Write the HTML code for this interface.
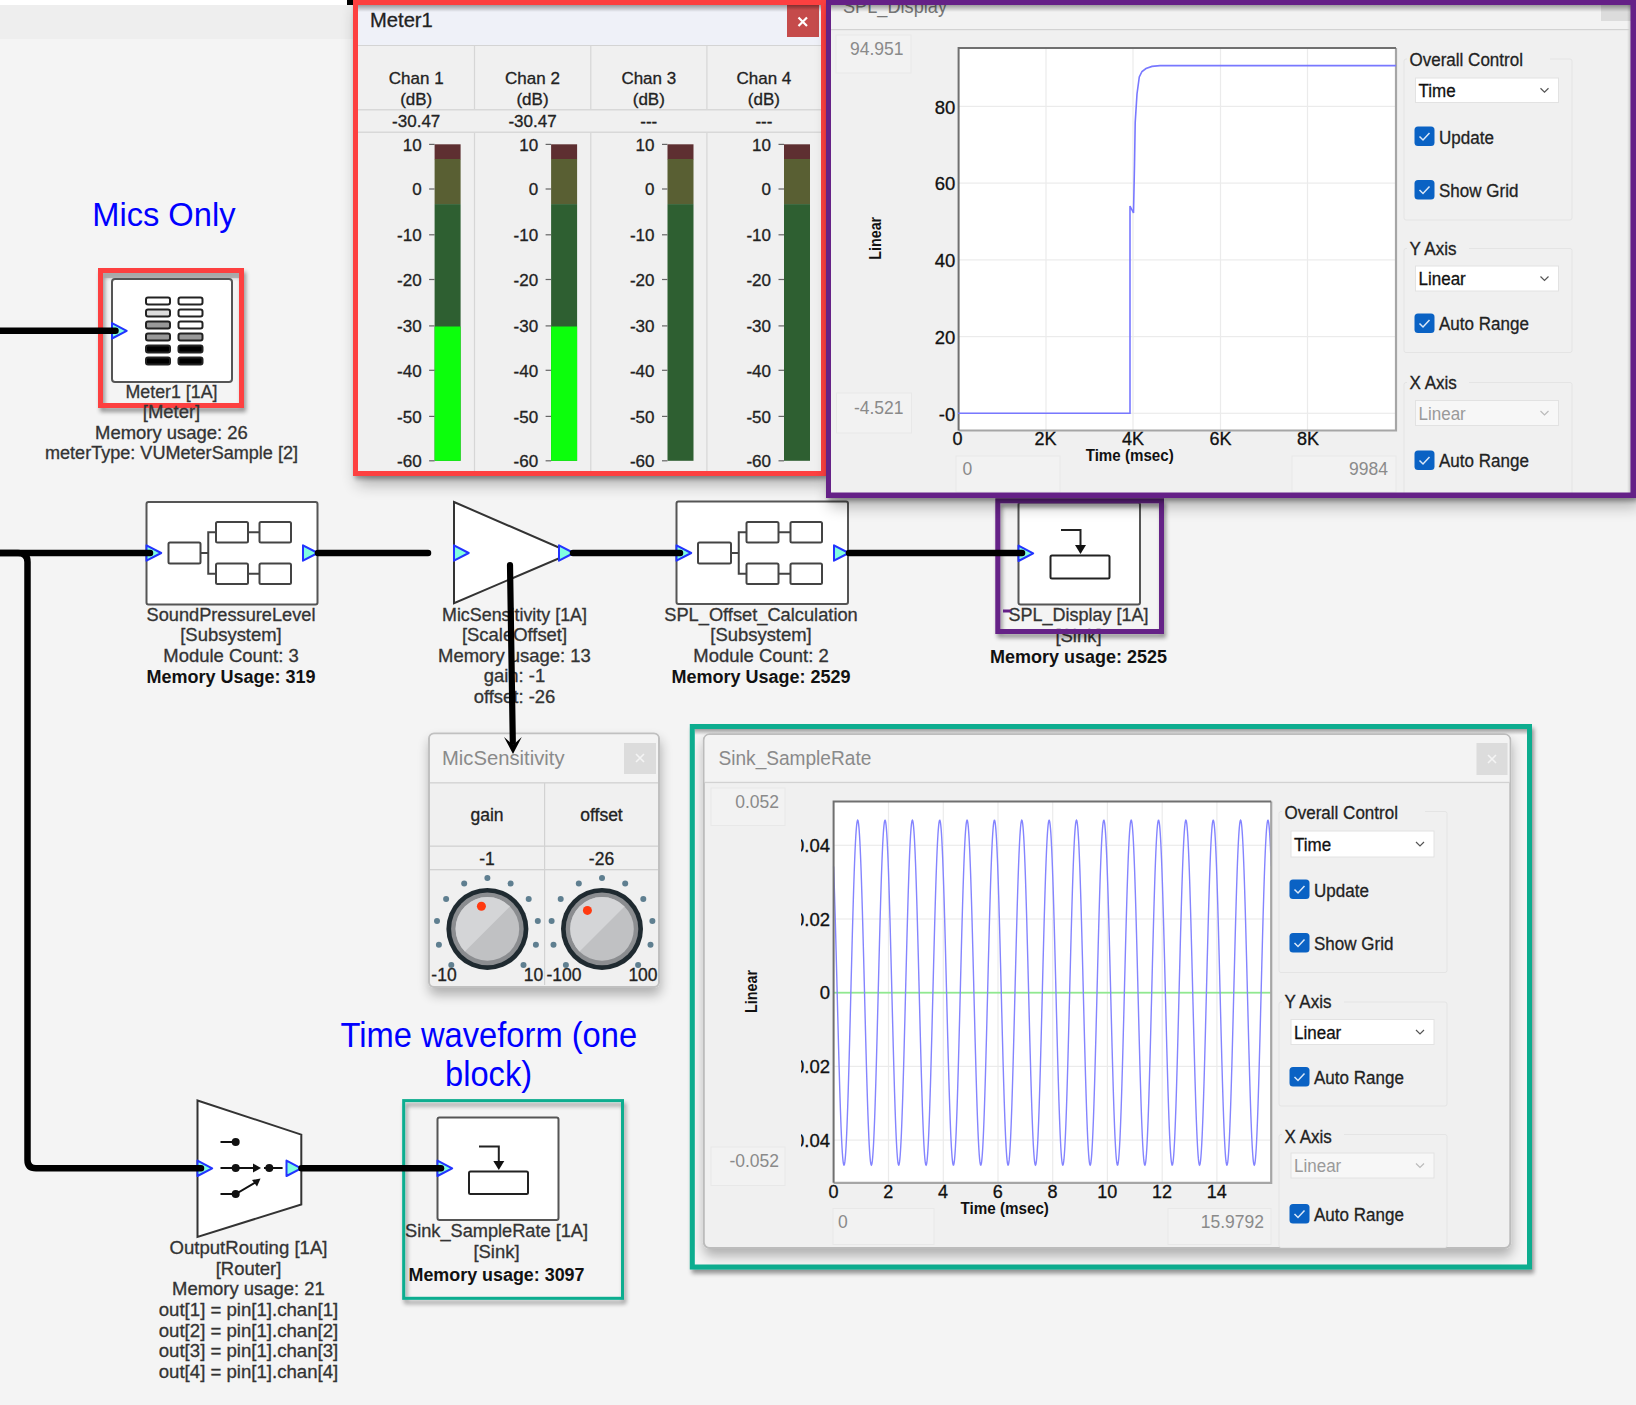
<!DOCTYPE html>
<html><head><meta charset="utf-8">
<style>
html,body{margin:0;padding:0;background:#f4f4f4;width:1636px;height:1405px;overflow:hidden}
svg{display:block;font-family:"Liberation Sans",sans-serif}
text.d{stroke-width:0.3px}
.lbl{font-size:18px;fill:#333;stroke:#333;stroke-width:0.3px}
.bld{font-size:18px;fill:#111;font-weight:bold}
</style></head><body>
<svg width="1636" height="1405" viewBox="0 0 1636 1405">
<defs>
 <filter id="sh" x="-10%" y="-10%" width="130%" height="130%">
  <feGaussianBlur in="SourceAlpha" stdDeviation="2.2" result="b1"/><feOffset in="b1" dx="2" dy="3" result="o1"/><feComponentTransfer in="o1" result="c1"><feFuncA type="linear" slope="0.3"/></feComponentTransfer>
  <feGaussianBlur in="SourceAlpha" stdDeviation="8" result="b2"/><feOffset in="b2" dx="4" dy="8" result="o2"/><feComponentTransfer in="o2" result="c2"><feFuncA type="linear" slope="0.3"/></feComponentTransfer>
  <feMerge><feMergeNode in="c2"/><feMergeNode in="c1"/><feMergeNode in="SourceGraphic"/></feMerge></filter>
 <filter id="sh2" x="-10%" y="-10%" width="130%" height="130%"><feGaussianBlur in="SourceAlpha" stdDeviation="6"/><feOffset dx="1" dy="7"/><feComponentTransfer><feFuncA type="linear" slope="0.28"/></feComponentTransfer><feMerge><feMergeNode/><feMergeNode in="SourceGraphic"/></feMerge></filter>
 <filter id="shT" x="-10%" y="-10%" width="130%" height="130%"><feGaussianBlur in="SourceAlpha" stdDeviation="2"/><feOffset dx="1.5" dy="3.5"/><feComponentTransfer><feFuncA type="linear" slope="0.4"/></feComponentTransfer><feMerge><feMergeNode/><feMergeNode in="SourceGraphic"/></feMerge></filter>
 <linearGradient id="rightsh" x1="0" y1="0" x2="1" y2="0"><stop offset="0" stop-color="#000" stop-opacity="0"/><stop offset="1" stop-color="#000" stop-opacity="0.18"/></linearGradient>
 <linearGradient id="topsh" x1="0" y1="0" x2="0" y2="1"><stop offset="0" stop-color="#000" stop-opacity="0.35"/><stop offset="1" stop-color="#000" stop-opacity="0"/></linearGradient>
 <g id="pin"><path d="M0,-7.7 L14.7,0 L0,7.7 Z" fill="#80ffe0" stroke="#2233ff" stroke-width="2" stroke-linejoin="round"/></g>
 <clipPath id="clipSink"><rect x="801" y="0" width="900" height="1405"/></clipPath>
</defs>

<rect x="0" y="0" width="1636" height="1405" fill="#f4f4f4"/>
<rect x="0" y="0" width="353" height="5" fill="#ffffff"/>
<rect x="0" y="5" width="353" height="34" fill="#eeeeee"/>
<rect x="347" y="0" width="6" height="5" fill="#000"/>
<text x="92.2" y="225.7" font-size="34" fill="#0000ff" textLength="143.3" lengthAdjust="spacingAndGlyphs">Mics Only</text>
<text x="488.8" y="1047.2" font-size="35" fill="#0000ff" text-anchor="middle" textLength="296.5" lengthAdjust="spacingAndGlyphs">Time waveform (one</text>
<text x="488.6" y="1085.6" font-size="35" fill="#0000ff" text-anchor="middle" textLength="87" lengthAdjust="spacingAndGlyphs">block)</text>
<g filter="url(#shT)"><rect x="100.5" y="270.5" width="141" height="135" fill="none" stroke="#fd4040" stroke-width="5"/></g>
<rect x="103" y="273" width="136" height="5" fill="#a8a8a8" opacity="0.8"/>
<rect x="112" y="279" width="120" height="103" rx="3" fill="#fff" stroke="#555" stroke-width="2"/>
<g stroke="#222" stroke-width="2">
 <rect x="146" y="297.5" width="24" height="7" rx="2" fill="#fff"/>
 <rect x="178.5" y="297.5" width="24" height="7" rx="2" fill="#fff"/>
 <rect x="146" y="309.5" width="24" height="7" rx="2" fill="#ddd"/>
 <rect x="178.5" y="309.5" width="24" height="7" rx="2" fill="#fff"/>
 <rect x="146" y="321.5" width="24" height="7" rx="2" fill="#999"/>
 <rect x="178.5" y="321.5" width="24" height="7" rx="2" fill="#fff"/>
 <rect x="146" y="333.5" width="24" height="7" rx="2" fill="#999"/>
 <rect x="178.5" y="333.5" width="24" height="7" rx="2" fill="#999"/>
 <rect x="146" y="345.5" width="24" height="7" rx="2" fill="#000"/>
 <rect x="178.5" y="345.5" width="24" height="7" rx="2" fill="#000"/>
 <rect x="146" y="357.5" width="24" height="7" rx="2" fill="#000"/>
 <rect x="178.5" y="357.5" width="24" height="7" rx="2" fill="#000"/>
</g>
<use href="#pin" x="112" y="330.8"/>
<text class="lbl" x="171.5" y="397.6" text-anchor="middle" textLength="92" lengthAdjust="spacingAndGlyphs">Meter1 [1A]</text>
<g transform="translate(171.5,0) scale(1.025,1) translate(-171.5,0)"><text class="lbl" x="171.5" y="418.1" text-anchor="middle">[Meter]</text></g>
<g transform="translate(171.5,0) scale(1.025,1) translate(-171.5,0)"><text class="lbl" x="171.5" y="438.6" text-anchor="middle">Memory usage: 26</text></g>
<text class="lbl" x="171.5" y="459.1" text-anchor="middle" textLength="253" lengthAdjust="spacingAndGlyphs">meterType: VUMeterSample [2]</text>
<rect x="146.5" y="502" width="171" height="102.5" rx="2" fill="#fff" stroke="#555" stroke-width="2"/>
<g fill="none" stroke="#444" stroke-width="2">
 <rect x="168.5" y="542.5" width="32.0" height="21" rx="1.5"/>
 <rect x="216" y="522" width="32" height="20.5" rx="1.5"/>
 <rect x="259.5" y="522" width="31.5" height="20.5" rx="1.5"/>
 <rect x="216" y="563.5" width="32" height="20.5" rx="1.5"/>
 <rect x="259.5" y="563.5" width="31.5" height="20.5" rx="1.5"/>
 <path d="M200.5,553 H208.25 M216,532.25 H208.25 V573.75 H216 M248,532.25 H259.5 M248,573.75 H259.5"/>
</g>
<use href="#pin" x="146.5" y="553"/><use href="#pin" x="303" y="553"/>
<text class="lbl" x="231" y="620.7" text-anchor="middle" textLength="169" lengthAdjust="spacingAndGlyphs">SoundPressureLevel</text>
<g transform="translate(231,0) scale(1.025,1) translate(-231,0)"><text class="lbl" x="231" y="641.3" text-anchor="middle">[Subsystem]</text></g>
<g transform="translate(231,0) scale(1.025,1) translate(-231,0)"><text class="lbl" x="231" y="661.9" text-anchor="middle">Module Count: 3</text></g>
<text class="bld" x="231" y="683.3" text-anchor="middle" textLength="169" lengthAdjust="spacingAndGlyphs">Memory Usage: 319</text>
<path d="M454,502 L571.5,553 L454,603.2 Z" fill="#fff" stroke="#333" stroke-width="2" stroke-linejoin="miter"/>
<use href="#pin" x="454" y="553"/><use href="#pin" x="559" y="553"/>
<text class="lbl" x="514.5" y="620.7" text-anchor="middle" textLength="145" lengthAdjust="spacingAndGlyphs">MicSensitivity [1A]</text>
<g transform="translate(514.5,0) scale(1.025,1) translate(-514.5,0)"><text class="lbl" x="514.5" y="641.3" text-anchor="middle">[ScaleOffset]</text></g>
<g transform="translate(514.5,0) scale(1.025,1) translate(-514.5,0)"><text class="lbl" x="514.5" y="661.9" text-anchor="middle">Memory usage: 13</text></g>
<g transform="translate(514.5,0) scale(1.025,1) translate(-514.5,0)"><text class="lbl" x="514.5" y="682.5" text-anchor="middle">gain: -1</text></g>
<g transform="translate(514.5,0) scale(1.025,1) translate(-514.5,0)"><text class="lbl" x="514.5" y="703.1" text-anchor="middle">offset: -26</text></g>
<rect x="676.5" y="501.5" width="171.5" height="102.5" rx="2" fill="#fff" stroke="#555" stroke-width="2"/>
<g fill="none" stroke="#444" stroke-width="2">
 <rect x="698" y="542.5" width="33" height="21" rx="1.5"/>
 <rect x="746.5" y="522" width="32.0" height="20.5" rx="1.5"/>
 <rect x="790.5" y="522" width="31.5" height="20.5" rx="1.5"/>
 <rect x="746.5" y="563.5" width="32.0" height="20.5" rx="1.5"/>
 <rect x="790.5" y="563.5" width="31.5" height="20.5" rx="1.5"/>
 <path d="M731,553 H738.75 M746.5,532.25 H738.75 V573.75 H746.5 M778.5,532.25 H790.5 M778.5,573.75 H790.5"/>
</g>
<use href="#pin" x="676.5" y="553"/><use href="#pin" x="834" y="553"/>
<text class="lbl" x="761" y="620.7" text-anchor="middle" textLength="193.5" lengthAdjust="spacingAndGlyphs">SPL_Offset_Calculation</text>
<g transform="translate(761,0) scale(1.025,1) translate(-761,0)"><text class="lbl" x="761" y="641.3" text-anchor="middle">[Subsystem]</text></g>
<g transform="translate(761,0) scale(1.025,1) translate(-761,0)"><text class="lbl" x="761" y="661.9" text-anchor="middle">Module Count: 2</text></g>
<text class="bld" x="761" y="683.3" text-anchor="middle">Memory Usage: 2529</text>
<rect x="1018.5" y="502.5" width="121.5" height="102" rx="2" fill="#fff" stroke="#555" stroke-width="2"/>
<path d="M1061,530 H1080.5 V547" fill="none" stroke="#222" stroke-width="2"/>
<path d="M1075.0,545 L1086.0,545 L1080.5,554 Z" fill="#111"/>
<rect x="1050.5" y="555.5" width="59.0" height="23.0" rx="1.5" fill="none" stroke="#222" stroke-width="2"/>
<use href="#pin" x="1018.5" y="553.3"/>
<text class="lbl" x="1078.5" y="621.3" text-anchor="middle" textLength="140" lengthAdjust="spacingAndGlyphs">SPL_Display [1A]</text>
<g transform="translate(1078.5,0) scale(1.025,1) translate(-1078.5,0)"><text class="lbl" x="1078.5" y="641.9" text-anchor="middle">[Sink]</text></g>
<text class="bld" x="1078.5" y="663.3" text-anchor="middle" textLength="177" lengthAdjust="spacingAndGlyphs">Memory usage: 2525</text>
<g filter="url(#shT)"><rect x="997.8" y="500.8" width="163.7" height="130.7" fill="none" stroke="#652087" stroke-width="5"/></g>
<rect x="1003" y="609.5" width="8" height="3" fill="#652087"/>
<path d="M197.5,1100.5 L301.3,1134.6 L301.3,1204.4 L197.5,1237 Z" fill="#fff" stroke="#333" stroke-width="2" stroke-linejoin="miter"/>
<g stroke="#111" stroke-width="2" fill="none"><path d="M220.5,1142 H235.7 M220.5,1168 H255 M264,1168 H282.6 M220.5,1194 H235.7 L256,1182"/></g>
<g fill="#111"><circle cx="235.7" cy="1142" r="4"/><circle cx="235.7" cy="1168" r="4"/><circle cx="269.3" cy="1168" r="4"/><circle cx="235.7" cy="1194" r="4"/><path d="M253,1163.5 L261,1168 L253,1172.5 Z"/><path d="M252,1180 L260.5,1178.5 L257,1186.5 Z"/></g>
<use href="#pin" x="197.5" y="1168.3"/><use href="#pin" x="286.5" y="1168.3"/>
<text class="lbl" x="248.5" y="1254.3" text-anchor="middle" textLength="158" lengthAdjust="spacingAndGlyphs">OutputRouting [1A]</text>
<g transform="translate(248.5,0) scale(1.025,1) translate(-248.5,0)"><text class="lbl" x="248.5" y="1274.8" text-anchor="middle">[Router]</text></g>
<g transform="translate(248.5,0) scale(1.025,1) translate(-248.5,0)"><text class="lbl" x="248.5" y="1295.4" text-anchor="middle">Memory usage: 21</text></g>
<text class="lbl" x="248.5" y="1316.0" text-anchor="middle" textLength="179.5" lengthAdjust="spacingAndGlyphs">out[1] = pin[1].chan[1]</text>
<text class="lbl" x="248.5" y="1336.5" text-anchor="middle" textLength="179.5" lengthAdjust="spacingAndGlyphs">out[2] = pin[1].chan[2]</text>
<text class="lbl" x="248.5" y="1357.0" text-anchor="middle" textLength="179.5" lengthAdjust="spacingAndGlyphs">out[3] = pin[1].chan[3]</text>
<text class="lbl" x="248.5" y="1377.6" text-anchor="middle" textLength="179.5" lengthAdjust="spacingAndGlyphs">out[4] = pin[1].chan[4]</text>
<rect x="437.5" y="1117.5" width="121" height="102.5" rx="2" fill="#fff" stroke="#555" stroke-width="2"/>
<path d="M479,1146.5 H498.8 V1163" fill="none" stroke="#222" stroke-width="2"/>
<path d="M493.3,1161 L504.3,1161 L498.8,1170 Z" fill="#111"/>
<rect x="469" y="1171.5" width="59" height="22.5" rx="1.5" fill="none" stroke="#222" stroke-width="2"/>
<use href="#pin" x="437.5" y="1168.3"/>
<text class="lbl" x="496.5" y="1237.2" text-anchor="middle" textLength="183" lengthAdjust="spacingAndGlyphs">Sink_SampleRate [1A]</text>
<g transform="translate(496.5,0) scale(1.025,1) translate(-496.5,0)"><text class="lbl" x="496.5" y="1258.5" text-anchor="middle">[Sink]</text></g>
<text class="bld" x="496.5" y="1280.6" text-anchor="middle" textLength="176" lengthAdjust="spacingAndGlyphs">Memory usage: 3097</text>
<g filter="url(#shT)"><rect x="403.7" y="1100.6" width="218.8" height="197.7" fill="none" stroke="#08ad8f" stroke-width="3"/></g>
<g stroke="#000" stroke-width="6.5" fill="none" stroke-linecap="round">
 <line x1="-5" y1="330.8" x2="115.5" y2="330.8"/>
 <path d="M-5,552.9 L150,552.9"/>
 <path d="M-5,552.9 H18 Q27.5,552.9 27.5,562 L27.5,1160 Q27.5,1168.3 36,1168.3 L201,1168.3"/>
 <line x1="318" y1="552.9" x2="428" y2="552.9"/>
 <line x1="573" y1="552.9" x2="680" y2="552.9"/>
 <line x1="849" y1="552.9" x2="1022" y2="552.9"/>
 <line x1="301.5" y1="1168.3" x2="441" y2="1168.3"/>
</g>
<g filter="url(#sh)"><rect x="355.5" y="2.5" width="468" height="471" fill="#f0f0f0" stroke="#fd4040" stroke-width="5"/></g>
<rect x="358" y="5" width="463" height="40" fill="#eff1f8"/>
<rect x="358" y="5" width="463" height="7" fill="url(#topsh)"/>
<rect x="787" y="5" width="32" height="32" fill="#c54b4b"/>
<rect x="787" y="5" width="32" height="5" fill="url(#topsh)"/>
<path d="M798.5,17.5 L807,26 M807,17.5 L798.5,26" stroke="#fff" stroke-width="2.2"/>
<text x="370" y="27" font-size="21" fill="#222" stroke="#222" stroke-width="0.3" textLength="62.8" lengthAdjust="spacingAndGlyphs">Meter1</text>
<rect x="358" y="45" width="463" height="1" fill="#d4d4d4"/>
<rect x="358" y="109" width="463" height="1.5" fill="#d8d8d8"/>
<rect x="358" y="131.5" width="463" height="1.5" fill="#d8d8d8"/>
<rect x="473.9" y="46" width="1.2" height="63" fill="#d6d6d6"/>
<rect x="473.9" y="133" width="1.2" height="338" fill="#d6d6d6"/>
<rect x="590.2" y="46" width="1.2" height="63" fill="#d6d6d6"/>
<rect x="590.2" y="133" width="1.2" height="338" fill="#d6d6d6"/>
<rect x="706.3" y="46" width="1.2" height="63" fill="#d6d6d6"/>
<rect x="706.3" y="133" width="1.2" height="338" fill="#d6d6d6"/>
<text x="416.2" y="83.5" font-size="17" fill="#222" stroke="#222" stroke-width="0.3" text-anchor="middle">Chan 1</text>
<text x="416.2" y="105" font-size="17" fill="#222" stroke="#222" stroke-width="0.3" text-anchor="middle">(dB)</text>
<text x="416.2" y="127" font-size="17" fill="#222" stroke="#222" stroke-width="0.3" text-anchor="middle">-30.47</text>
<rect x="434.6" y="144.3" width="26" height="15" fill="#5e2f31"/>
<rect x="434.6" y="159" width="26" height="45.1" fill="#595f33"/>
<rect x="434.6" y="204.1" width="26" height="256.7" fill="#2e5f31"/>
<rect x="434.6" y="326.5" width="26" height="134.3" fill="#0cff0c"/>
<rect x="429.1" y="143.8" width="5.5" height="1.2" fill="#666"/>
<text x="421.6" y="150.7" font-size="17" fill="#222" stroke="#222" stroke-width="0.3" text-anchor="end">10</text>
<rect x="429.1" y="188.4" width="5.5" height="1.2" fill="#666"/>
<text x="421.6" y="195.3" font-size="17" fill="#222" stroke="#222" stroke-width="0.3" text-anchor="end">0</text>
<rect x="429.1" y="234.2" width="5.5" height="1.2" fill="#666"/>
<text x="421.6" y="241.1" font-size="17" fill="#222" stroke="#222" stroke-width="0.3" text-anchor="end">-10</text>
<rect x="429.1" y="278.9" width="5.5" height="1.2" fill="#666"/>
<text x="421.6" y="285.8" font-size="17" fill="#222" stroke="#222" stroke-width="0.3" text-anchor="end">-20</text>
<rect x="429.1" y="325.3" width="5.5" height="1.2" fill="#666"/>
<text x="421.6" y="332.2" font-size="17" fill="#222" stroke="#222" stroke-width="0.3" text-anchor="end">-30</text>
<rect x="429.1" y="369.7" width="5.5" height="1.2" fill="#666"/>
<text x="421.6" y="376.6" font-size="17" fill="#222" stroke="#222" stroke-width="0.3" text-anchor="end">-40</text>
<rect x="429.1" y="415.8" width="5.5" height="1.2" fill="#666"/>
<text x="421.6" y="422.7" font-size="17" fill="#222" stroke="#222" stroke-width="0.3" text-anchor="end">-50</text>
<rect x="429.1" y="460.2" width="5.5" height="1.2" fill="#666"/>
<text x="421.6" y="467.1" font-size="17" fill="#222" stroke="#222" stroke-width="0.3" text-anchor="end">-60</text>
<text x="532.5" y="83.5" font-size="17" fill="#222" stroke="#222" stroke-width="0.3" text-anchor="middle">Chan 2</text>
<text x="532.5" y="105" font-size="17" fill="#222" stroke="#222" stroke-width="0.3" text-anchor="middle">(dB)</text>
<text x="532.5" y="127" font-size="17" fill="#222" stroke="#222" stroke-width="0.3" text-anchor="middle">-30.47</text>
<rect x="551.1" y="144.3" width="26" height="15" fill="#5e2f31"/>
<rect x="551.1" y="159" width="26" height="45.1" fill="#595f33"/>
<rect x="551.1" y="204.1" width="26" height="256.7" fill="#2e5f31"/>
<rect x="551.1" y="326.5" width="26" height="134.3" fill="#0cff0c"/>
<rect x="545.6" y="143.8" width="5.5" height="1.2" fill="#666"/>
<text x="538.1" y="150.7" font-size="17" fill="#222" stroke="#222" stroke-width="0.3" text-anchor="end">10</text>
<rect x="545.6" y="188.4" width="5.5" height="1.2" fill="#666"/>
<text x="538.1" y="195.3" font-size="17" fill="#222" stroke="#222" stroke-width="0.3" text-anchor="end">0</text>
<rect x="545.6" y="234.2" width="5.5" height="1.2" fill="#666"/>
<text x="538.1" y="241.1" font-size="17" fill="#222" stroke="#222" stroke-width="0.3" text-anchor="end">-10</text>
<rect x="545.6" y="278.9" width="5.5" height="1.2" fill="#666"/>
<text x="538.1" y="285.8" font-size="17" fill="#222" stroke="#222" stroke-width="0.3" text-anchor="end">-20</text>
<rect x="545.6" y="325.3" width="5.5" height="1.2" fill="#666"/>
<text x="538.1" y="332.2" font-size="17" fill="#222" stroke="#222" stroke-width="0.3" text-anchor="end">-30</text>
<rect x="545.6" y="369.7" width="5.5" height="1.2" fill="#666"/>
<text x="538.1" y="376.6" font-size="17" fill="#222" stroke="#222" stroke-width="0.3" text-anchor="end">-40</text>
<rect x="545.6" y="415.8" width="5.5" height="1.2" fill="#666"/>
<text x="538.1" y="422.7" font-size="17" fill="#222" stroke="#222" stroke-width="0.3" text-anchor="end">-50</text>
<rect x="545.6" y="460.2" width="5.5" height="1.2" fill="#666"/>
<text x="538.1" y="467.1" font-size="17" fill="#222" stroke="#222" stroke-width="0.3" text-anchor="end">-60</text>
<text x="648.8" y="83.5" font-size="17" fill="#222" stroke="#222" stroke-width="0.3" text-anchor="middle">Chan 3</text>
<text x="648.8" y="105" font-size="17" fill="#222" stroke="#222" stroke-width="0.3" text-anchor="middle">(dB)</text>
<text x="648.8" y="127" font-size="17" fill="#222" stroke="#222" stroke-width="0.3" text-anchor="middle">---</text>
<rect x="667.5" y="144.3" width="26" height="15" fill="#5e2f31"/>
<rect x="667.5" y="159" width="26" height="45.1" fill="#595f33"/>
<rect x="667.5" y="204.1" width="26" height="256.7" fill="#2e5f31"/>
<rect x="662.0" y="143.8" width="5.5" height="1.2" fill="#666"/>
<text x="654.5" y="150.7" font-size="17" fill="#222" stroke="#222" stroke-width="0.3" text-anchor="end">10</text>
<rect x="662.0" y="188.4" width="5.5" height="1.2" fill="#666"/>
<text x="654.5" y="195.3" font-size="17" fill="#222" stroke="#222" stroke-width="0.3" text-anchor="end">0</text>
<rect x="662.0" y="234.2" width="5.5" height="1.2" fill="#666"/>
<text x="654.5" y="241.1" font-size="17" fill="#222" stroke="#222" stroke-width="0.3" text-anchor="end">-10</text>
<rect x="662.0" y="278.9" width="5.5" height="1.2" fill="#666"/>
<text x="654.5" y="285.8" font-size="17" fill="#222" stroke="#222" stroke-width="0.3" text-anchor="end">-20</text>
<rect x="662.0" y="325.3" width="5.5" height="1.2" fill="#666"/>
<text x="654.5" y="332.2" font-size="17" fill="#222" stroke="#222" stroke-width="0.3" text-anchor="end">-30</text>
<rect x="662.0" y="369.7" width="5.5" height="1.2" fill="#666"/>
<text x="654.5" y="376.6" font-size="17" fill="#222" stroke="#222" stroke-width="0.3" text-anchor="end">-40</text>
<rect x="662.0" y="415.8" width="5.5" height="1.2" fill="#666"/>
<text x="654.5" y="422.7" font-size="17" fill="#222" stroke="#222" stroke-width="0.3" text-anchor="end">-50</text>
<rect x="662.0" y="460.2" width="5.5" height="1.2" fill="#666"/>
<text x="654.5" y="467.1" font-size="17" fill="#222" stroke="#222" stroke-width="0.3" text-anchor="end">-60</text>
<text x="763.9" y="83.5" font-size="17" fill="#222" stroke="#222" stroke-width="0.3" text-anchor="middle">Chan 4</text>
<text x="763.9" y="105" font-size="17" fill="#222" stroke="#222" stroke-width="0.3" text-anchor="middle">(dB)</text>
<text x="763.9" y="127" font-size="17" fill="#222" stroke="#222" stroke-width="0.3" text-anchor="middle">---</text>
<rect x="784.0" y="144.3" width="26" height="15" fill="#5e2f31"/>
<rect x="784.0" y="159" width="26" height="45.1" fill="#595f33"/>
<rect x="784.0" y="204.1" width="26" height="256.7" fill="#2e5f31"/>
<rect x="778.5" y="143.8" width="5.5" height="1.2" fill="#666"/>
<text x="771.0" y="150.7" font-size="17" fill="#222" stroke="#222" stroke-width="0.3" text-anchor="end">10</text>
<rect x="778.5" y="188.4" width="5.5" height="1.2" fill="#666"/>
<text x="771.0" y="195.3" font-size="17" fill="#222" stroke="#222" stroke-width="0.3" text-anchor="end">0</text>
<rect x="778.5" y="234.2" width="5.5" height="1.2" fill="#666"/>
<text x="771.0" y="241.1" font-size="17" fill="#222" stroke="#222" stroke-width="0.3" text-anchor="end">-10</text>
<rect x="778.5" y="278.9" width="5.5" height="1.2" fill="#666"/>
<text x="771.0" y="285.8" font-size="17" fill="#222" stroke="#222" stroke-width="0.3" text-anchor="end">-20</text>
<rect x="778.5" y="325.3" width="5.5" height="1.2" fill="#666"/>
<text x="771.0" y="332.2" font-size="17" fill="#222" stroke="#222" stroke-width="0.3" text-anchor="end">-30</text>
<rect x="778.5" y="369.7" width="5.5" height="1.2" fill="#666"/>
<text x="771.0" y="376.6" font-size="17" fill="#222" stroke="#222" stroke-width="0.3" text-anchor="end">-40</text>
<rect x="778.5" y="415.8" width="5.5" height="1.2" fill="#666"/>
<text x="771.0" y="422.7" font-size="17" fill="#222" stroke="#222" stroke-width="0.3" text-anchor="end">-50</text>
<rect x="778.5" y="460.2" width="5.5" height="1.2" fill="#666"/>
<text x="771.0" y="467.1" font-size="17" fill="#222" stroke="#222" stroke-width="0.3" text-anchor="end">-60</text>
<g filter="url(#sh)"><rect x="828.5" y="2.5" width="805" height="493" fill="#f0f0f0" stroke="#652087" stroke-width="5"/></g>
<rect x="831" y="5" width="800" height="24.5" fill="#f2f2f2"/>
<text x="843" y="12.5" font-size="20" fill="#777" textLength="104" lengthAdjust="spacingAndGlyphs">SPL_Display</text>
<rect x="826" y="0" width="810" height="5" fill="#652087"/>
<rect x="1601" y="5" width="30" height="16" fill="#dcdcdc"/>
<rect x="831" y="5" width="800" height="7" fill="url(#topsh)"/>
<rect x="1627" y="5" width="4" height="488" fill="url(#rightsh)"/>
<rect x="831" y="29" width="800" height="1.2" fill="#d2d2d2"/>
<rect x="836" y="35" width="75" height="38" fill="#f2f2f2" stroke="#e8e8e8" stroke-width="1"/>
<text x="903.5" y="54.5" font-size="17.5" fill="#8a8a8a" text-anchor="end">94.951</text>
<rect x="836.5" y="393" width="75" height="40" fill="#f2f2f2" stroke="#e8e8e8" stroke-width="1"/>
<text x="903.5" y="413.5" font-size="17.5" fill="#8a8a8a" text-anchor="end">-4.521</text>
<rect x="956" y="456" width="104" height="36" fill="#f2f2f2" stroke="#e8e8e8" stroke-width="1"/>
<text x="962.5" y="475" font-size="17.5" fill="#8a8a8a">0</text>
<rect x="1292" y="456" width="104" height="36" fill="#f2f2f2" stroke="#e8e8e8" stroke-width="1"/>
<text x="1388" y="474.5" font-size="17.5" fill="#8a8a8a" text-anchor="end">9984</text>
<rect x="958.6" y="48" width="437.4" height="382.5" fill="#fff"/>
<rect x="1045.4" y="48" width="1.2" height="382.5" fill="#ebebeb"/>
<rect x="1132.4" y="48" width="1.2" height="382.5" fill="#ebebeb"/>
<rect x="1219.9" y="48" width="1.2" height="382.5" fill="#ebebeb"/>
<rect x="1306.9" y="48" width="1.2" height="382.5" fill="#ebebeb"/>
<rect x="958.6" y="105.80000000000001" width="437.4" height="1.2" fill="#ebebeb"/>
<rect x="958.6" y="182.5" width="437.4" height="1.2" fill="#ebebeb"/>
<rect x="958.6" y="259.29999999999995" width="437.4" height="1.2" fill="#ebebeb"/>
<rect x="958.6" y="336.0" width="437.4" height="1.2" fill="#ebebeb"/>
<rect x="958.6" y="412.7" width="437.4" height="1.2" fill="#ebebeb"/>
<path d="M1396,48 V430.5 H958.6" fill="none" stroke="#a6a6a6" stroke-width="2.2"/>
<path d="M958.6,430.5 V48 H1396" fill="none" stroke="#707070" stroke-width="2"/>
<path d="M958,413.3 L1130,413.3 L1130,206 L1133.5,213 L1134.5,165 L1135.2,122.6 L1137,94 L1139.3,77 L1142,71.5 L1146,68.5 L1152,66.4 L1160,65.6 L1396,65.6" fill="none" stroke="#7878ff" stroke-width="1.6"/>
<text x="955.3" y="113.6" font-size="18.5" fill="#111" stroke="#111" stroke-width="0.3" text-anchor="end">80</text>
<text x="955.3" y="190.3" font-size="18.5" fill="#111" stroke="#111" stroke-width="0.3" text-anchor="end">60</text>
<text x="955.3" y="267.1" font-size="18.5" fill="#111" stroke="#111" stroke-width="0.3" text-anchor="end">40</text>
<text x="955.3" y="343.8" font-size="18.5" fill="#111" stroke="#111" stroke-width="0.3" text-anchor="end">20</text>
<text x="955.3" y="420.5" font-size="18.5" fill="#111" stroke="#111" stroke-width="0.3" text-anchor="end">-0</text>
<text x="957.5" y="444.5" font-size="18" fill="#111" stroke="#111" stroke-width="0.3" text-anchor="middle">0</text>
<text x="1045.5" y="444.5" font-size="18" fill="#111" stroke="#111" stroke-width="0.3" text-anchor="middle">2K</text>
<text x="1133" y="444.5" font-size="18" fill="#111" stroke="#111" stroke-width="0.3" text-anchor="middle">4K</text>
<text x="1220.5" y="444.5" font-size="18" fill="#111" stroke="#111" stroke-width="0.3" text-anchor="middle">6K</text>
<text x="1308" y="444.5" font-size="18" fill="#111" stroke="#111" stroke-width="0.3" text-anchor="middle">8K</text>
<text x="1129.7" y="461" font-size="16.5" fill="#111" text-anchor="middle" font-weight="bold" textLength="88" lengthAdjust="spacingAndGlyphs">Time (msec)</text>
<text transform="translate(881,238.3) rotate(-90)" font-size="16" fill="#111" text-anchor="middle" font-weight="bold" textLength="43" lengthAdjust="spacingAndGlyphs">Linear</text>
<rect x="1404" y="59" width="168" height="161" rx="2" fill="none" stroke="#e4e4e4" stroke-width="1"/>
<rect x="1407" y="51" width="143" height="14" fill="#f0f0f0"/>
<g transform="translate(1409.5,65.5) scale(0.92,1)"><text x="0" y="0" font-size="18.5" fill="#222" stroke="#222" stroke-width="0.3">Overall Control</text></g>
<rect x="1415.5" y="78" width="143" height="24.5" fill="#fff" stroke="#e2e2e2" stroke-width="1"/>
<g transform="translate(1418.5,96.5) scale(0.92,1)"><text x="0" y="0" font-size="18.5" fill="#111" stroke="#111" stroke-width="0.3">Time</text></g>
<path d="M1540.5,88.25 L1544.5,92.25 L1548.5,88.25" fill="none" stroke="#555" stroke-width="1.2"/>
<rect x="1414.5" y="126.5" width="20" height="19.5" rx="3.5" fill="#0a62c4"/>
<path d="M1419.5,136.5 L1423.0,140.0 L1429.5,133.0" fill="none" stroke="#dbe8f8" stroke-width="1.5"/>
<g transform="translate(1439.0,143.5) scale(0.92,1)"><text x="0" y="0" font-size="18.5" fill="#222" stroke="#222" stroke-width="0.3">Update</text></g>
<rect x="1414.5" y="180" width="20" height="19.5" rx="3.5" fill="#0a62c4"/>
<path d="M1419.5,190 L1423.0,193.5 L1429.5,186.5" fill="none" stroke="#dbe8f8" stroke-width="1.5"/>
<g transform="translate(1439.0,196.5) scale(0.92,1)"><text x="0" y="0" font-size="18.5" fill="#222" stroke="#222" stroke-width="0.3">Show Grid</text></g>
<rect x="1404" y="248.5" width="168" height="104" rx="2" fill="none" stroke="#e4e4e4" stroke-width="1"/>
<rect x="1407" y="240.5" width="62" height="14" fill="#f0f0f0"/>
<g transform="translate(1409.5,254.5) scale(0.92,1)"><text x="0" y="0" font-size="18.5" fill="#222" stroke="#222" stroke-width="0.3">Y Axis</text></g>
<rect x="1415.5" y="266" width="143" height="25" fill="#fff" stroke="#e2e2e2" stroke-width="1"/>
<g transform="translate(1418.5,285) scale(0.92,1)"><text x="0" y="0" font-size="18.5" fill="#111" stroke="#111" stroke-width="0.3">Linear</text></g>
<path d="M1540.5,276.5 L1544.5,280.5 L1548.5,276.5" fill="none" stroke="#555" stroke-width="1.2"/>
<rect x="1414.5" y="313.5" width="20" height="19.5" rx="3.5" fill="#0a62c4"/>
<path d="M1419.5,323.5 L1423.0,327.0 L1429.5,320.0" fill="none" stroke="#dbe8f8" stroke-width="1.5"/>
<g transform="translate(1439.0,330) scale(0.92,1)"><text x="0" y="0" font-size="18.5" fill="#222" stroke="#222" stroke-width="0.3">Auto Range</text></g>
<rect x="1404" y="382.5" width="168" height="112" rx="2" fill="none" stroke="#e4e4e4" stroke-width="1"/>
<rect x="1407" y="374.5" width="62" height="14" fill="#f0f0f0"/>
<g transform="translate(1409.5,388.5) scale(0.92,1)"><text x="0" y="0" font-size="18.5" fill="#222" stroke="#222" stroke-width="0.3">X Axis</text></g>
<rect x="1415.5" y="400.5" width="143" height="25" fill="#f7f7f7" stroke="#e2e2e2" stroke-width="1"/>
<g transform="translate(1418.5,419.5) scale(0.92,1)"><text x="0" y="0" font-size="18.5" fill="#9a9a9a">Linear</text></g>
<path d="M1540.5,411.0 L1544.5,415.0 L1548.5,411.0" fill="none" stroke="#bbb" stroke-width="1.2"/>
<rect x="1414.5" y="450.5" width="20" height="19.5" rx="3.5" fill="#0a62c4"/>
<path d="M1419.5,460.5 L1423.0,464.0 L1429.5,457.0" fill="none" stroke="#dbe8f8" stroke-width="1.5"/>
<g transform="translate(1439.0,467) scale(0.92,1)"><text x="0" y="0" font-size="18.5" fill="#222" stroke="#222" stroke-width="0.3">Auto Range</text></g>
<rect x="826" y="492.5" width="810" height="5.5" fill="#652087"/>
<rect x="1630.5" y="0" width="5.5" height="498" fill="#652087"/>
<g filter="url(#sh2)"><rect x="429" y="733.5" width="230" height="253.5" rx="5" fill="#f0f0f0" stroke="#c0c0c0" stroke-width="2"/></g>
<path d="M430,782 V739 Q430,734.5 434.5,734.5 H653.5 Q658,734.5 658,739 V782 Z" fill="#f3f3f3"/>
<rect x="624" y="743" width="32" height="31" fill="#dcdcdc"/>
<path d="M636,754 L644,762 M644,754 L636,762" stroke="#f4f4f4" stroke-width="1.6"/>
<text x="442" y="765" font-size="20.5" fill="#8a8a8a" textLength="122.5" lengthAdjust="spacingAndGlyphs">MicSensitivity</text>
<rect x="430" y="782.2" width="228" height="1.3" fill="#d2d2d2"/>
<rect x="430" y="845.5" width="228" height="1.3" fill="#d2d2d2"/>
<rect x="430" y="869" width="228" height="1.3" fill="#d2d2d2"/>
<rect x="544" y="783" width="1.2" height="202" fill="#d2d2d2"/>
<text x="487" y="821" font-size="17.5" fill="#222" stroke="#222" stroke-width="0.3" text-anchor="middle">gain</text>
<text x="601.5" y="821" font-size="17.5" fill="#222" stroke="#222" stroke-width="0.3" text-anchor="middle">offset</text>
<text x="487" y="865" font-size="17.5" fill="#222" stroke="#222" stroke-width="0.3" text-anchor="middle">-1</text>
<text x="601.5" y="865" font-size="17.5" fill="#222" stroke="#222" stroke-width="0.3" text-anchor="middle">-26</text>
<circle cx="451.3" cy="965.0" r="3" fill="#5f7f90"/>
<circle cx="438.9" cy="944.7" r="3" fill="#5f7f90"/>
<circle cx="437.0" cy="920.9" r="3" fill="#5f7f90"/>
<circle cx="446.1" cy="898.9" r="3" fill="#5f7f90"/>
<circle cx="464.2" cy="883.5" r="3" fill="#5f7f90"/>
<circle cx="487.4" cy="877.9" r="3" fill="#5f7f90"/>
<circle cx="510.6" cy="883.5" r="3" fill="#5f7f90"/>
<circle cx="528.7" cy="898.9" r="3" fill="#5f7f90"/>
<circle cx="537.8" cy="920.9" r="3" fill="#5f7f90"/>
<circle cx="535.9" cy="944.7" r="3" fill="#5f7f90"/>
<circle cx="523.5" cy="965.0" r="3" fill="#5f7f90"/>
<circle cx="487.4" cy="928.9" r="41" fill="#1f2a30"/>
<circle cx="487.4" cy="928.9" r="36.3" fill="#8b8d90"/>
<circle cx="487.4" cy="928.9" r="31.8" fill="#c0c1c3"/>
<path d="M509.9,906.4 A31.8,31.8 0 0 0 464.9,951.4 Z" fill="#d4d5d7"/>
<circle cx="481.4" cy="906.3" r="4.5" fill="#ff3a10"/>
<circle cx="565.9" cy="965.0" r="3" fill="#5f7f90"/>
<circle cx="553.5" cy="944.7" r="3" fill="#5f7f90"/>
<circle cx="551.6" cy="920.9" r="3" fill="#5f7f90"/>
<circle cx="560.7" cy="898.9" r="3" fill="#5f7f90"/>
<circle cx="578.8" cy="883.5" r="3" fill="#5f7f90"/>
<circle cx="602.0" cy="877.9" r="3" fill="#5f7f90"/>
<circle cx="625.2" cy="883.5" r="3" fill="#5f7f90"/>
<circle cx="643.3" cy="898.9" r="3" fill="#5f7f90"/>
<circle cx="652.4" cy="920.9" r="3" fill="#5f7f90"/>
<circle cx="650.5" cy="944.7" r="3" fill="#5f7f90"/>
<circle cx="638.1" cy="965.0" r="3" fill="#5f7f90"/>
<circle cx="602" cy="928.9" r="41" fill="#1f2a30"/>
<circle cx="602" cy="928.9" r="36.3" fill="#8b8d90"/>
<circle cx="602" cy="928.9" r="31.8" fill="#c0c1c3"/>
<path d="M624.5,906.4 A31.8,31.8 0 0 0 579.5,951.4 Z" fill="#d4d5d7"/>
<circle cx="587.4" cy="910.4" r="4.5" fill="#ff3a10"/>
<text x="444" y="980.5" font-size="17.5" fill="#222" stroke="#222" stroke-width="0.3" text-anchor="middle">-10</text>
<text x="533.5" y="980.5" font-size="17.5" fill="#222" stroke="#222" stroke-width="0.3" text-anchor="middle">10</text>
<text x="564" y="980.5" font-size="17.5" fill="#222" stroke="#222" stroke-width="0.3" text-anchor="middle">-100</text>
<text x="643" y="980.5" font-size="17.5" fill="#222" stroke="#222" stroke-width="0.3" text-anchor="middle">100</text>
<line x1="510" y1="565" x2="512.8" y2="742" stroke="#000" stroke-width="6.2" stroke-linecap="round"/>
<path d="M504,737 L513,745 L521.8,737 L513,754 Z" fill="#000"/>
<g filter="url(#shT)"><rect x="692.3" y="726.5" width="837.2" height="540.5" fill="#f4f4f4" stroke="#08ad8f" stroke-width="5"/></g>
<rect x="695" y="729" width="832" height="6" fill="url(#topsh)"/>
<g filter="url(#sh2)"><rect x="703.8" y="734.3" width="806.5" height="513.8" rx="6" fill="#f0f0f0" stroke="#bcbcbc" stroke-width="2"/></g>
<path d="M704.6,782 V740 Q704.6,735 710,735 H1504 Q1509.5,735 1509.5,740 V782 Z" fill="#f3f3f3"/>
<rect x="704.6" y="781.8" width="805" height="1.3" fill="#d2d2d2"/>
<text x="718.5" y="765" font-size="20.5" fill="#8a8a8a" textLength="152.8" lengthAdjust="spacingAndGlyphs">Sink_SampleRate</text>
<rect x="1476.5" y="743" width="31" height="32" fill="#dcdcdc"/>
<path d="M1488,755 L1496,763 M1496,755 L1488,763" stroke="#f4f4f4" stroke-width="1.6"/>
<rect x="711" y="788" width="74" height="37.5" fill="#f2f2f2" stroke="#e8e8e8" stroke-width="1"/>
<text x="779" y="807.5" font-size="17.5" fill="#8a8a8a" text-anchor="end">0.052</text>
<rect x="711" y="1147" width="74" height="38.5" fill="#f2f2f2" stroke="#e8e8e8" stroke-width="1"/>
<text x="779" y="1166.5" font-size="17.5" fill="#8a8a8a" text-anchor="end">-0.052</text>
<rect x="833" y="1208.5" width="101" height="36" fill="#f2f2f2" stroke="#e8e8e8" stroke-width="1"/>
<text x="838" y="1227.5" font-size="17.5" fill="#8a8a8a">0</text>
<rect x="1168" y="1208.5" width="103" height="36" fill="#f2f2f2" stroke="#e8e8e8" stroke-width="1"/>
<text x="1264" y="1227.5" font-size="17.5" fill="#8a8a8a" text-anchor="end">15.9792</text>
<rect x="833.6" y="801.6" width="437.6" height="381.19999999999993" fill="#fff"/>
<rect x="887.9" y="801.6" width="1.2" height="381.19999999999993" fill="#ebebeb"/>
<rect x="942.7" y="801.6" width="1.2" height="381.19999999999993" fill="#ebebeb"/>
<rect x="997.4" y="801.6" width="1.2" height="381.19999999999993" fill="#ebebeb"/>
<rect x="1052.1" y="801.6" width="1.2" height="381.19999999999993" fill="#ebebeb"/>
<rect x="1106.8" y="801.6" width="1.2" height="381.19999999999993" fill="#ebebeb"/>
<rect x="1161.6" y="801.6" width="1.2" height="381.19999999999993" fill="#ebebeb"/>
<rect x="1216.3" y="801.6" width="1.2" height="381.19999999999993" fill="#ebebeb"/>
<rect x="833.6" y="844.7" width="437.6" height="1.2" fill="#ebebeb"/>
<rect x="833.6" y="918.4" width="437.6" height="1.2" fill="#ebebeb"/>
<rect x="833.6" y="1065.8" width="437.6" height="1.2" fill="#ebebeb"/>
<rect x="833.6" y="1139.5" width="437.6" height="1.2" fill="#ebebeb"/>
<rect x="833.6" y="991.8000000000001" width="437.6" height="1.8" fill="#90e890"/>
<polyline points="833.60,866.53 833.91,875.29 834.23,884.65 834.54,894.57 834.85,905.00 835.16,915.88 835.48,927.16 835.79,938.77 836.10,950.66 836.41,962.77 836.73,975.03 837.04,987.38 837.35,999.77 837.66,1012.11 837.98,1024.35 838.29,1036.43 838.60,1048.29 838.91,1059.86 839.23,1071.08 839.54,1081.90 839.85,1092.26 840.16,1102.11 840.48,1111.39 840.79,1120.06 841.10,1128.07 841.41,1135.39 841.73,1141.97 842.04,1147.78 842.35,1152.80 842.66,1156.98 842.98,1160.32 843.29,1162.80 843.60,1164.40 843.91,1165.12 844.23,1164.94 844.54,1163.88 844.85,1161.94 845.17,1159.12 845.48,1155.45 845.79,1150.94 846.10,1145.61 846.42,1139.49 846.73,1132.62 847.04,1125.03 847.35,1116.75 847.67,1107.84 847.98,1098.33 848.29,1088.28 848.60,1077.73 848.92,1066.75 849.23,1055.38 849.54,1043.70 849.85,1031.75 850.17,1019.59 850.48,1007.30 850.79,994.94 851.10,982.56 851.42,970.23 851.73,958.02 852.04,945.99 852.35,934.20 852.67,922.72 852.98,911.59 853.29,900.88 853.60,890.64 853.92,880.93 854.23,871.80 854.54,863.28 854.85,855.44 855.17,848.30 855.48,841.91 855.79,836.29 856.11,831.48 856.42,827.51 856.73,824.38 857.04,822.12 857.36,820.74 857.67,820.24 857.98,820.64 858.29,821.92 858.61,824.08 858.92,827.11 859.23,830.99 859.54,835.71 859.86,841.24 860.17,847.54 860.48,854.60 860.79,862.37 861.11,870.81 861.42,879.87 861.73,889.52 862.04,899.70 862.36,910.36 862.67,921.44 862.98,932.89 863.29,944.65 863.61,956.66 863.92,968.85 864.23,981.17 864.54,993.54 864.86,1005.91 865.17,1018.22 865.48,1030.39 865.79,1042.36 866.11,1054.08 866.42,1065.49 866.73,1076.52 867.05,1087.11 867.36,1097.22 867.67,1106.80 867.98,1115.78 868.30,1124.13 868.61,1131.80 868.92,1138.76 869.23,1144.96 869.55,1150.38 869.86,1154.98 870.17,1158.75 870.48,1161.67 870.80,1163.71 871.11,1164.87 871.42,1165.14 871.73,1164.53 872.05,1163.03 872.36,1160.65 872.67,1157.40 872.98,1153.31 873.30,1148.39 873.61,1142.67 873.92,1136.17 874.23,1128.93 874.55,1121.00 874.86,1112.40 875.17,1103.18 875.48,1093.40 875.80,1083.09 876.11,1072.32 876.42,1061.14 876.73,1049.61 877.05,1037.78 877.36,1025.72 877.67,1013.49 877.99,1001.16 878.30,988.78 878.61,976.42 878.92,964.14 879.24,952.02 879.55,940.10 879.86,928.45 880.17,917.13 880.49,906.21 880.80,895.72 881.11,885.74 881.42,876.31 881.74,867.48 882.05,859.30 882.36,851.80 882.67,845.03 882.99,839.02 883.30,833.80 883.61,829.40 883.92,825.84 884.24,823.15 884.55,821.32 884.86,820.38 885.17,820.33 885.49,821.16 885.80,822.88 886.11,825.48 886.42,828.94 886.74,833.24 887.05,838.36 887.36,844.28 887.67,850.96 887.99,858.38 888.30,866.48 888.61,875.24 888.93,884.60 889.24,894.52 889.55,904.94 889.86,915.82 890.18,927.10 890.49,938.71 890.80,950.60 891.11,962.70 891.43,974.97 891.74,987.32 892.05,999.70 892.36,1012.04 892.68,1024.29 892.99,1036.37 893.30,1048.23 893.61,1059.80 893.93,1071.02 894.24,1081.84 894.55,1092.21 894.86,1102.06 895.18,1111.34 895.49,1120.02 895.80,1128.03 896.11,1135.35 896.43,1141.94 896.74,1147.75 897.05,1152.77 897.36,1156.96 897.68,1160.31 897.99,1162.79 898.30,1164.40 898.61,1165.12 898.93,1164.95 899.24,1163.89 899.55,1161.95 899.87,1159.14 900.18,1155.47 900.49,1150.96 900.80,1145.64 901.12,1139.53 901.43,1132.66 901.74,1125.07 902.05,1116.80 902.37,1107.89 902.68,1098.38 902.99,1088.33 903.30,1077.79 903.62,1066.81 903.93,1055.45 904.24,1043.76 904.55,1031.81 904.87,1019.66 905.18,1007.37 905.49,995.00 905.80,982.63 906.12,970.30 906.43,958.09 906.74,946.06 907.05,934.27 907.37,922.78 907.68,911.65 907.99,900.93 908.30,890.69 908.62,880.98 908.93,871.84 909.24,863.33 909.55,855.48 909.87,848.34 910.18,841.94 910.49,836.32 910.81,831.51 911.12,827.52 911.43,824.39 911.74,822.13 912.06,820.74 912.37,820.24 912.68,820.63 912.99,821.91 913.31,824.07 913.62,827.09 913.93,830.97 914.24,835.68 914.56,841.21 914.87,847.51 915.18,854.56 915.49,862.32 915.81,870.76 916.12,879.82 916.43,889.47 916.74,899.64 917.06,910.30 917.37,921.38 917.68,932.83 917.99,944.59 918.31,956.59 918.62,968.79 918.93,981.10 919.24,993.48 919.56,1005.85 919.87,1018.15 920.18,1030.32 920.49,1042.30 920.81,1054.02 921.12,1065.43 921.43,1076.46 921.75,1087.06 922.06,1097.17 922.37,1106.75 922.68,1115.73 923.00,1124.09 923.31,1131.76 923.62,1138.72 923.93,1144.93 924.25,1150.35 924.56,1154.96 924.87,1158.73 925.18,1161.65 925.50,1163.70 925.81,1164.86 926.12,1165.14 926.43,1164.53 926.75,1163.04 927.06,1160.66 927.37,1157.42 927.68,1153.33 928.00,1148.42 928.31,1142.70 928.62,1136.21 928.93,1128.97 929.25,1121.04 929.56,1112.45 929.87,1103.23 930.18,1093.45 930.50,1083.15 930.81,1072.38 931.12,1061.20 931.43,1049.67 931.75,1037.85 932.06,1025.79 932.37,1013.56 932.69,1001.23 933.00,988.85 933.31,976.49 933.62,964.21 933.94,952.08 934.25,940.16 934.56,928.51 934.87,917.19 935.19,906.26 935.50,895.78 935.81,885.79 936.12,876.36 936.44,867.53 936.75,859.34 937.06,851.84 937.37,845.06 937.69,839.05 938.00,833.83 938.31,829.42 938.62,825.86 938.94,823.16 939.25,821.33 939.56,820.38 939.87,820.33 940.19,821.16 940.50,822.87 940.81,825.46 941.12,828.92 941.44,833.21 941.75,838.33 942.06,844.24 942.37,850.92 942.69,858.33 943.00,866.44 943.31,875.19 943.63,884.55 943.94,894.46 944.25,904.89 944.56,915.76 944.88,927.03 945.19,938.64 945.50,950.53 945.81,962.64 946.13,974.90 946.44,987.25 946.75,999.63 947.06,1011.98 947.38,1024.22 947.69,1036.31 948.00,1048.16 948.31,1059.74 948.63,1070.96 948.94,1081.79 949.25,1092.15 949.56,1102.00 949.88,1111.29 950.19,1119.97 950.50,1127.99 950.81,1135.32 951.13,1141.91 951.44,1147.73 951.75,1152.75 952.06,1156.94 952.38,1160.29 952.69,1162.78 953.00,1164.39 953.31,1165.11 953.63,1164.95 953.94,1163.90 954.25,1161.96 954.57,1159.16 954.88,1155.49 955.19,1150.99 955.50,1145.67 955.82,1139.56 956.13,1132.70 956.44,1125.11 956.75,1116.85 957.07,1107.94 957.38,1098.44 957.69,1088.39 958.00,1077.85 958.32,1066.87 958.63,1055.51 958.94,1043.82 959.25,1031.88 959.57,1019.73 959.88,1007.44 960.19,995.07 960.50,982.69 960.82,970.37 961.13,958.16 961.44,946.12 961.75,934.33 962.07,922.84 962.38,911.70 962.69,900.99 963.00,890.75 963.32,881.03 963.63,871.89 963.94,863.37 964.25,855.52 964.57,848.38 964.88,841.97 965.19,836.35 965.51,831.53 965.82,827.54 966.13,824.41 966.44,822.14 966.76,820.75 967.07,820.24 967.38,820.63 967.69,821.90 968.01,824.05 968.32,827.07 968.63,830.95 968.94,835.66 969.26,841.17 969.57,847.47 969.88,854.52 970.19,862.28 970.51,870.71 970.82,879.77 971.13,889.41 971.44,899.59 971.76,910.24 972.07,921.32 972.38,932.77 972.69,944.52 973.01,956.53 973.32,968.72 973.63,981.03 973.94,993.41 974.26,1005.78 974.57,1018.08 974.88,1030.26 975.19,1042.24 975.51,1053.96 975.82,1065.37 976.13,1076.40 976.45,1087.00 976.76,1097.12 977.07,1106.70 977.38,1115.69 977.70,1124.04 978.01,1131.72 978.32,1138.69 978.63,1144.90 978.95,1150.32 979.26,1154.94 979.57,1158.72 979.88,1161.64 980.20,1163.69 980.51,1164.86 980.82,1165.14 981.13,1164.54 981.45,1163.05 981.76,1160.68 982.07,1157.44 982.38,1153.36 982.70,1148.45 983.01,1142.73 983.32,1136.24 983.63,1129.02 983.95,1121.09 984.26,1112.49 984.57,1103.28 984.88,1093.50 985.20,1083.21 985.51,1072.44 985.82,1061.26 986.13,1049.73 986.45,1037.91 986.76,1025.85 987.07,1013.63 987.39,1001.29 987.70,988.91 988.01,976.55 988.32,964.28 988.64,952.14 988.95,940.22 989.26,928.57 989.57,917.25 989.89,906.32 990.20,895.83 990.51,885.85 990.82,876.41 991.14,867.57 991.45,859.38 991.76,851.88 992.07,845.10 992.39,839.08 992.70,833.85 993.01,829.44 993.32,825.88 993.64,823.17 993.95,821.34 994.26,820.39 994.57,820.32 994.89,821.15 995.20,822.86 995.51,825.45 995.82,828.89 996.14,833.19 996.45,838.30 996.76,844.21 997.07,850.89 997.39,858.29 997.70,866.39 998.01,875.14 998.33,884.50 998.64,894.41 998.95,904.83 999.26,915.70 999.58,926.97 999.89,938.58 1000.20,950.47 1000.51,962.57 1000.83,974.83 1001.14,987.18 1001.45,999.57 1001.76,1011.91 1002.08,1024.16 1002.39,1036.24 1002.70,1048.10 1003.01,1059.68 1003.33,1070.90 1003.64,1081.73 1003.95,1092.10 1004.26,1101.95 1004.58,1111.24 1004.89,1119.93 1005.20,1127.95 1005.51,1135.28 1005.83,1141.87 1006.14,1147.70 1006.45,1152.72 1006.76,1156.92 1007.08,1160.28 1007.39,1162.77 1007.70,1164.38 1008.01,1165.11 1008.33,1164.95 1008.64,1163.91 1008.95,1161.98 1009.27,1159.18 1009.58,1155.52 1009.89,1151.02 1010.20,1145.70 1010.52,1139.60 1010.83,1132.74 1011.14,1125.16 1011.45,1116.89 1011.77,1107.99 1012.08,1098.49 1012.39,1088.44 1012.70,1077.91 1013.02,1066.93 1013.33,1055.57 1013.64,1043.89 1013.95,1031.94 1014.27,1019.79 1014.58,1007.50 1014.89,995.14 1015.20,982.76 1015.52,970.43 1015.83,958.22 1016.14,946.19 1016.45,934.39 1016.77,922.90 1017.08,911.76 1017.39,901.05 1017.70,890.80 1018.02,881.08 1018.33,871.94 1018.64,863.42 1018.95,855.56 1019.27,848.41 1019.58,842.01 1019.89,836.38 1020.21,831.56 1020.52,827.56 1020.83,824.42 1021.14,822.15 1021.46,820.75 1021.77,820.24 1022.08,820.62 1022.39,821.89 1022.71,824.04 1023.02,827.05 1023.33,830.93 1023.64,835.63 1023.96,841.14 1024.27,847.44 1024.58,854.48 1024.89,862.24 1025.21,870.66 1025.52,879.72 1025.83,889.36 1026.14,899.53 1026.46,910.18 1026.77,921.26 1027.08,932.71 1027.39,944.46 1027.71,956.46 1028.02,968.65 1028.33,980.97 1028.64,993.34 1028.96,1005.71 1029.27,1018.02 1029.58,1030.19 1029.89,1042.17 1030.21,1053.90 1030.52,1065.31 1030.83,1076.34 1031.15,1086.95 1031.46,1097.07 1031.77,1106.65 1032.08,1115.64 1032.40,1124.00 1032.71,1131.68 1033.02,1138.65 1033.33,1144.87 1033.65,1150.30 1033.96,1154.92 1034.27,1158.70 1034.58,1161.62 1034.90,1163.68 1035.21,1164.86 1035.52,1165.14 1035.83,1164.54 1036.15,1163.06 1036.46,1160.69 1036.77,1157.46 1037.08,1153.38 1037.40,1148.47 1037.71,1142.76 1038.02,1136.28 1038.33,1129.06 1038.65,1121.13 1038.96,1112.54 1039.27,1103.34 1039.58,1093.56 1039.90,1083.26 1040.21,1072.50 1040.52,1061.33 1040.83,1049.80 1041.15,1037.98 1041.46,1025.92 1041.77,1013.69 1042.09,1001.36 1042.40,988.98 1042.71,976.62 1043.02,964.34 1043.34,952.21 1043.65,940.29 1043.96,928.63 1044.27,917.31 1044.59,906.38 1044.90,895.89 1045.21,885.90 1045.52,876.46 1045.84,867.62 1046.15,859.42 1046.46,851.91 1046.77,845.13 1047.09,839.11 1047.40,833.88 1047.71,829.46 1048.02,825.89 1048.34,823.18 1048.65,821.34 1048.96,820.39 1049.27,820.32 1049.59,821.14 1049.90,822.85 1050.21,825.43 1050.52,828.87 1050.84,833.16 1051.15,838.27 1051.46,844.18 1051.77,850.85 1052.09,858.25 1052.40,866.35 1052.71,875.09 1053.03,884.44 1053.34,894.36 1053.65,904.77 1053.96,915.64 1054.28,926.91 1054.59,938.52 1054.90,950.40 1055.21,962.51 1055.53,974.77 1055.84,987.12 1056.15,999.50 1056.46,1011.84 1056.78,1024.09 1057.09,1036.18 1057.40,1048.04 1057.71,1059.61 1058.03,1070.85 1058.34,1081.67 1058.65,1092.04 1058.96,1101.90 1059.28,1111.20 1059.59,1119.88 1059.90,1127.91 1060.21,1135.24 1060.53,1141.84 1060.84,1147.67 1061.15,1152.70 1061.46,1156.90 1061.78,1160.26 1062.09,1162.76 1062.40,1164.38 1062.71,1165.11 1063.03,1164.96 1063.34,1163.91 1063.65,1161.99 1063.97,1159.19 1064.28,1155.54 1064.59,1151.04 1064.90,1145.73 1065.22,1139.63 1065.53,1132.78 1065.84,1125.20 1066.15,1116.94 1066.47,1108.04 1066.78,1098.54 1067.09,1088.50 1067.40,1077.96 1067.72,1066.99 1068.03,1055.63 1068.34,1043.95 1068.65,1032.01 1068.97,1019.86 1069.28,1007.57 1069.59,995.20 1069.90,982.83 1070.22,970.50 1070.53,958.29 1070.84,946.25 1071.15,934.45 1071.47,922.96 1071.78,911.82 1072.09,901.10 1072.40,890.86 1072.72,881.13 1073.03,871.99 1073.34,863.46 1073.65,855.60 1073.97,848.45 1074.28,842.04 1074.59,836.41 1074.91,831.58 1075.22,827.58 1075.53,824.44 1075.84,822.16 1076.16,820.76 1076.47,820.24 1076.78,820.62 1077.09,821.88 1077.41,824.02 1077.72,827.04 1078.03,830.90 1078.34,835.60 1078.66,841.11 1078.97,847.40 1079.28,854.44 1079.59,862.19 1079.91,870.62 1080.22,879.67 1080.53,889.31 1080.84,899.48 1081.16,910.13 1081.47,921.20 1081.78,932.64 1082.09,944.40 1082.41,956.40 1082.72,968.59 1083.03,980.90 1083.34,993.28 1083.66,1005.65 1083.97,1017.95 1084.28,1030.13 1084.59,1042.11 1084.91,1053.83 1085.22,1065.25 1085.53,1076.28 1085.85,1086.89 1086.16,1097.01 1086.47,1106.60 1086.78,1115.59 1087.10,1123.96 1087.41,1131.64 1087.72,1138.62 1088.03,1144.84 1088.35,1150.27 1088.66,1154.89 1088.97,1158.68 1089.28,1161.61 1089.60,1163.67 1089.91,1164.85 1090.22,1165.15 1090.53,1164.55 1090.85,1163.07 1091.16,1160.71 1091.47,1157.48 1091.78,1153.41 1092.10,1148.50 1092.41,1142.80 1092.72,1136.32 1093.03,1129.10 1093.35,1121.17 1093.66,1112.59 1093.97,1103.39 1094.28,1093.61 1094.60,1083.32 1094.91,1072.56 1095.22,1061.39 1095.53,1049.86 1095.85,1038.04 1096.16,1025.99 1096.47,1013.76 1096.79,1001.42 1097.10,989.05 1097.41,976.68 1097.72,964.41 1098.04,952.27 1098.35,940.35 1098.66,928.70 1098.97,917.37 1099.29,906.44 1099.60,895.94 1099.91,885.95 1100.22,876.51 1100.54,867.67 1100.85,859.47 1101.16,851.95 1101.47,845.17 1101.79,839.14 1102.10,833.90 1102.41,829.49 1102.72,825.91 1103.04,823.19 1103.35,821.35 1103.66,820.39 1103.97,820.32 1104.29,821.14 1104.60,822.84 1104.91,825.41 1105.22,828.85 1105.54,833.14 1105.85,838.24 1106.16,844.14 1106.47,850.81 1106.79,858.21 1107.10,866.30 1107.41,875.04 1107.73,884.39 1108.04,894.30 1108.35,904.71 1108.66,915.58 1108.98,926.85 1109.29,938.45 1109.60,950.34 1109.91,962.44 1110.23,974.70 1110.54,987.05 1110.85,999.43 1111.16,1011.78 1111.48,1024.03 1111.79,1036.11 1112.10,1047.97 1112.41,1059.55 1112.73,1070.79 1113.04,1081.62 1113.35,1091.99 1113.66,1101.85 1113.98,1111.15 1114.29,1119.84 1114.60,1127.87 1114.91,1135.20 1115.23,1141.80 1115.54,1147.64 1115.85,1152.67 1116.16,1156.88 1116.48,1160.25 1116.79,1162.75 1117.10,1164.37 1117.41,1165.11 1117.73,1164.96 1118.04,1163.92 1118.35,1162.00 1118.67,1159.21 1118.98,1155.56 1119.29,1151.07 1119.60,1145.76 1119.92,1139.67 1120.23,1132.82 1120.54,1125.24 1120.85,1116.98 1121.17,1108.09 1121.48,1098.59 1121.79,1088.56 1122.10,1078.02 1122.42,1067.05 1122.73,1055.69 1123.04,1044.01 1123.35,1032.07 1123.67,1019.92 1123.98,1007.63 1124.29,995.27 1124.60,982.89 1124.92,970.56 1125.23,958.35 1125.54,946.31 1125.85,934.52 1126.17,923.02 1126.48,911.88 1126.79,901.16 1127.10,890.91 1127.42,881.18 1127.73,872.03 1128.04,863.50 1128.35,855.64 1128.67,848.49 1128.98,842.07 1129.29,836.43 1129.61,831.60 1129.92,827.60 1130.23,824.45 1130.54,822.17 1130.86,820.76 1131.17,820.25 1131.48,820.62 1131.79,821.87 1132.11,824.01 1132.42,827.02 1132.73,830.88 1133.04,835.57 1133.36,841.08 1133.67,847.37 1133.98,854.40 1134.29,862.15 1134.61,870.57 1134.92,879.62 1135.23,889.25 1135.54,899.42 1135.86,910.07 1136.17,921.14 1136.48,932.58 1136.79,944.33 1137.11,956.33 1137.42,968.52 1137.73,980.84 1138.04,993.21 1138.36,1005.58 1138.67,1017.89 1138.98,1030.06 1139.29,1042.04 1139.61,1053.77 1139.92,1065.19 1140.23,1076.23 1140.55,1086.84 1140.86,1096.96 1141.17,1106.55 1141.48,1115.55 1141.80,1123.91 1142.11,1131.61 1142.42,1138.58 1142.73,1144.80 1143.05,1150.24 1143.36,1154.87 1143.67,1158.66 1143.98,1161.60 1144.30,1163.66 1144.61,1164.85 1144.92,1165.15 1145.23,1164.55 1145.55,1163.08 1145.86,1160.72 1146.17,1157.50 1146.48,1153.43 1146.80,1148.53 1147.11,1142.83 1147.42,1136.35 1147.73,1129.14 1148.05,1121.22 1148.36,1112.64 1148.67,1103.44 1148.98,1093.67 1149.30,1083.38 1149.61,1072.62 1149.92,1061.45 1150.23,1049.92 1150.55,1038.10 1150.86,1026.05 1151.17,1013.83 1151.49,1001.49 1151.80,989.11 1152.11,976.75 1152.42,964.47 1152.74,952.34 1153.05,940.41 1153.36,928.76 1153.67,917.43 1153.99,906.49 1154.30,896.00 1154.61,886.00 1154.92,876.56 1155.24,867.71 1155.55,859.51 1155.86,851.99 1156.17,845.20 1156.49,839.17 1156.80,833.93 1157.11,829.51 1157.42,825.93 1157.74,823.21 1158.05,821.36 1158.36,820.39 1158.67,820.32 1158.99,821.13 1159.30,822.83 1159.61,825.40 1159.92,828.83 1160.24,833.11 1160.55,838.21 1160.86,844.11 1161.17,850.77 1161.49,858.17 1161.80,866.25 1162.11,874.99 1162.43,884.34 1162.74,894.25 1163.05,904.66 1163.36,915.52 1163.68,926.79 1163.99,938.39 1164.30,950.27 1164.61,962.38 1164.93,974.63 1165.24,986.99 1165.55,999.37 1165.86,1011.71 1166.18,1023.96 1166.49,1036.05 1166.80,1047.91 1167.11,1059.49 1167.43,1070.73 1167.74,1081.56 1168.05,1091.93 1168.36,1101.80 1168.68,1111.10 1168.99,1119.79 1169.30,1127.83 1169.61,1135.17 1169.93,1141.77 1170.24,1147.61 1170.55,1152.65 1170.86,1156.86 1171.18,1160.23 1171.49,1162.73 1171.80,1164.36 1172.11,1165.11 1172.43,1164.96 1172.74,1163.93 1173.05,1162.02 1173.37,1159.23 1173.68,1155.58 1173.99,1151.10 1174.30,1145.79 1174.62,1139.70 1174.93,1132.86 1175.24,1125.29 1175.55,1117.03 1175.87,1108.14 1176.18,1098.65 1176.49,1088.61 1176.80,1078.08 1177.12,1067.11 1177.43,1055.76 1177.74,1044.08 1178.05,1032.14 1178.37,1019.99 1178.68,1007.70 1178.99,995.34 1179.30,982.96 1179.62,970.63 1179.93,958.42 1180.24,946.38 1180.55,934.58 1180.87,923.08 1181.18,911.94 1181.49,901.22 1181.80,890.96 1182.12,881.23 1182.43,872.08 1182.74,863.55 1183.05,855.68 1183.37,848.52 1183.68,842.10 1183.99,836.46 1184.31,831.63 1184.62,827.62 1184.93,824.47 1185.24,822.18 1185.56,820.77 1185.87,820.25 1186.18,820.61 1186.49,821.86 1186.81,824.00 1187.12,827.00 1187.43,830.86 1187.74,835.55 1188.06,841.05 1188.37,847.33 1188.68,854.36 1188.99,862.11 1189.31,870.52 1189.62,879.57 1189.93,889.20 1190.24,899.36 1190.56,910.01 1190.87,921.08 1191.18,932.52 1191.49,944.27 1191.81,956.27 1192.12,968.46 1192.43,980.77 1192.74,993.14 1193.06,1005.51 1193.37,1017.82 1193.68,1030.00 1193.99,1041.98 1194.31,1053.71 1194.62,1065.13 1194.93,1076.17 1195.25,1086.78 1195.56,1096.91 1195.87,1106.50 1196.18,1115.50 1196.50,1123.87 1196.81,1131.57 1197.12,1138.54 1197.43,1144.77 1197.75,1150.22 1198.06,1154.85 1198.37,1158.64 1198.68,1161.58 1199.00,1163.66 1199.31,1164.84 1199.62,1165.15 1199.93,1164.56 1200.25,1163.09 1200.56,1160.74 1200.87,1157.52 1201.18,1153.45 1201.50,1148.56 1201.81,1142.86 1202.12,1136.39 1202.43,1129.18 1202.75,1121.26 1203.06,1112.68 1203.37,1103.49 1203.68,1093.72 1204.00,1083.43 1204.31,1072.68 1204.62,1061.51 1204.93,1049.99 1205.25,1038.17 1205.56,1026.12 1205.87,1013.89 1206.19,1001.56 1206.50,989.18 1206.81,976.82 1207.12,964.54 1207.44,952.40 1207.75,940.48 1208.06,928.82 1208.37,917.49 1208.69,906.55 1209.00,896.05 1209.31,886.06 1209.62,876.61 1209.94,867.76 1210.25,859.55 1210.56,852.03 1210.87,845.24 1211.19,839.20 1211.50,833.96 1211.81,829.53 1212.12,825.94 1212.44,823.22 1212.75,821.37 1213.06,820.40 1213.37,820.32 1213.69,821.12 1214.00,822.82 1214.31,825.38 1214.62,828.81 1214.94,833.09 1215.25,838.18 1215.56,844.08 1215.87,850.73 1216.19,858.13 1216.50,866.21 1216.81,874.95 1217.13,884.29 1217.44,894.19 1217.75,904.60 1218.06,915.46 1218.38,926.73 1218.69,938.33 1219.00,950.21 1219.31,962.31 1219.63,974.57 1219.94,986.92 1220.25,999.30 1220.56,1011.65 1220.88,1023.90 1221.19,1035.98 1221.50,1047.85 1221.81,1059.43 1222.13,1070.67 1222.44,1081.50 1222.75,1091.88 1223.06,1101.75 1223.38,1111.05 1223.69,1119.75 1224.00,1127.78 1224.31,1135.13 1224.63,1141.74 1224.94,1147.58 1225.25,1152.62 1225.56,1156.84 1225.88,1160.21 1226.19,1162.72 1226.50,1164.36 1226.81,1165.11 1227.13,1164.97 1227.44,1163.94 1227.75,1162.03 1228.07,1159.24 1228.38,1155.60 1228.69,1151.12 1229.00,1145.83 1229.32,1139.74 1229.63,1132.89 1229.94,1125.33 1230.25,1117.08 1230.57,1108.19 1230.88,1098.70 1231.19,1088.67 1231.50,1078.14 1231.82,1067.17 1232.13,1055.82 1232.44,1044.14 1232.75,1032.20 1233.07,1020.05 1233.38,1007.77 1233.69,995.40 1234.00,983.02 1234.32,970.70 1234.63,958.48 1234.94,946.44 1235.25,934.64 1235.57,923.14 1235.88,912.00 1236.19,901.27 1236.50,891.02 1236.82,881.29 1237.13,872.13 1237.44,863.59 1237.75,855.72 1238.07,848.56 1238.38,842.14 1238.69,836.49 1239.01,831.65 1239.32,827.64 1239.63,824.48 1239.94,822.19 1240.26,820.77 1240.57,820.25 1240.88,820.61 1241.19,821.85 1241.51,823.98 1241.82,826.98 1242.13,830.83 1242.44,835.52 1242.76,841.02 1243.07,847.29 1243.38,854.32 1243.69,862.06 1244.01,870.48 1244.32,879.52 1244.63,889.15 1244.94,899.31 1245.26,909.95 1245.57,921.02 1245.88,932.46 1246.19,944.21 1246.51,956.20 1246.82,968.39 1247.13,980.70 1247.44,993.08 1247.76,1005.45 1248.07,1017.75 1248.38,1029.93 1248.69,1041.92 1249.01,1053.65 1249.32,1065.06 1249.63,1076.11 1249.95,1086.72 1250.26,1096.85 1250.57,1106.45 1250.88,1115.45 1251.20,1123.83 1251.51,1131.53 1251.82,1138.51 1252.13,1144.74 1252.45,1150.19 1252.76,1154.82 1253.07,1158.63 1253.38,1161.57 1253.70,1163.65 1254.01,1164.84 1254.32,1165.15 1254.63,1164.57 1254.95,1163.10 1255.26,1160.75 1255.57,1157.54 1255.88,1153.48 1256.20,1148.59 1256.51,1142.90 1256.82,1136.43 1257.13,1129.22 1257.45,1121.31 1257.76,1112.73 1258.07,1103.54 1258.38,1093.77 1258.70,1083.49 1259.01,1072.74 1259.32,1061.57 1259.63,1050.05 1259.95,1038.23 1260.26,1026.18 1260.57,1013.96 1260.89,1001.62 1261.20,989.25 1261.51,976.88 1261.82,964.60 1262.14,952.47 1262.45,940.54 1262.76,928.88 1263.07,917.55 1263.39,906.61 1263.70,896.11 1264.01,886.11 1264.32,876.66 1264.64,867.80 1264.95,859.59 1265.26,852.07 1265.57,845.27 1265.89,839.23 1266.20,833.98 1266.51,829.55 1266.82,825.96 1267.14,823.23 1267.45,821.37 1267.76,820.40 1268.07,820.31 1268.39,821.12 1268.70,822.80 1269.01,825.37 1269.32,828.79 1269.64,833.06 1269.95,838.15 1270.26,844.04 1270.57,850.70 1270.89,858.08 1271.20,866.16" fill="none" stroke="#8484ff" stroke-width="1.4"/>
<path d="M1271.2,801.6 V1182.8 H833.6" fill="none" stroke="#a6a6a6" stroke-width="2.2"/>
<path d="M833.6,1182.8 V801.6 H1271.2" fill="none" stroke="#707070" stroke-width="2"/>
<g clip-path="url(#clipSink)">
<text x="830" y="851.8" font-size="18.5" fill="#111" stroke="#111" stroke-width="0.3" text-anchor="end">0.04</text>
<text x="830" y="925.5" font-size="18.5" fill="#111" stroke="#111" stroke-width="0.3" text-anchor="end">0.02</text>
<text x="830" y="999.2" font-size="18.5" fill="#111" stroke="#111" stroke-width="0.3" text-anchor="end">0</text>
<text x="830" y="1073.3" font-size="18.5" fill="#111" stroke="#111" stroke-width="0.3" text-anchor="end">-0.02</text>
<text x="830" y="1147.0" font-size="18.5" fill="#111" stroke="#111" stroke-width="0.3" text-anchor="end">-0.04</text>
</g>
<text x="833.6" y="1198" font-size="18" fill="#111" stroke="#111" stroke-width="0.3" text-anchor="middle">0</text>
<text x="888.3" y="1198" font-size="18" fill="#111" stroke="#111" stroke-width="0.3" text-anchor="middle">2</text>
<text x="943.1" y="1198" font-size="18" fill="#111" stroke="#111" stroke-width="0.3" text-anchor="middle">4</text>
<text x="997.8" y="1198" font-size="18" fill="#111" stroke="#111" stroke-width="0.3" text-anchor="middle">6</text>
<text x="1052.5" y="1198" font-size="18" fill="#111" stroke="#111" stroke-width="0.3" text-anchor="middle">8</text>
<text x="1107.2" y="1198" font-size="18" fill="#111" stroke="#111" stroke-width="0.3" text-anchor="middle">10</text>
<text x="1162.0" y="1198" font-size="18" fill="#111" stroke="#111" stroke-width="0.3" text-anchor="middle">12</text>
<text x="1216.7" y="1198" font-size="18" fill="#111" stroke="#111" stroke-width="0.3" text-anchor="middle">14</text>
<text x="1004.7" y="1214" font-size="16.5" fill="#111" text-anchor="middle" font-weight="bold" textLength="88.5" lengthAdjust="spacingAndGlyphs">Time (msec)</text>
<text transform="translate(756.5,991.4) rotate(-90)" font-size="16" fill="#111" text-anchor="middle" font-weight="bold" textLength="43" lengthAdjust="spacingAndGlyphs">Linear</text>
<rect x="1279" y="811.5" width="168" height="161" rx="2" fill="none" stroke="#e4e4e4" stroke-width="1"/>
<rect x="1282" y="803.5" width="143" height="14" fill="#f0f0f0"/>
<g transform="translate(1284.5,818.5) scale(0.92,1)"><text x="0" y="0" font-size="18.5" fill="#222" stroke="#222" stroke-width="0.3">Overall Control</text></g>
<rect x="1291" y="831" width="143" height="26" fill="#fff" stroke="#e2e2e2" stroke-width="1"/>
<g transform="translate(1294,851) scale(0.92,1)"><text x="0" y="0" font-size="18.5" fill="#111" stroke="#111" stroke-width="0.3">Time</text></g>
<path d="M1416,842.0 L1420,846.0 L1424,842.0" fill="none" stroke="#555" stroke-width="1.2"/>
<rect x="1289.5" y="879.5" width="20" height="19.5" rx="3.5" fill="#0a62c4"/>
<path d="M1294.5,889.5 L1298.0,893.0 L1304.5,886.0" fill="none" stroke="#dbe8f8" stroke-width="1.5"/>
<g transform="translate(1314.0,896.5) scale(0.92,1)"><text x="0" y="0" font-size="18.5" fill="#222" stroke="#222" stroke-width="0.3">Update</text></g>
<rect x="1289.5" y="933" width="20" height="19.5" rx="3.5" fill="#0a62c4"/>
<path d="M1294.5,943 L1298.0,946.5 L1304.5,939.5" fill="none" stroke="#dbe8f8" stroke-width="1.5"/>
<g transform="translate(1314.0,949.5) scale(0.92,1)"><text x="0" y="0" font-size="18.5" fill="#222" stroke="#222" stroke-width="0.3">Show Grid</text></g>
<rect x="1279" y="1002" width="168" height="104" rx="2" fill="none" stroke="#e4e4e4" stroke-width="1"/>
<rect x="1282" y="994" width="62" height="14" fill="#f0f0f0"/>
<g transform="translate(1284.5,1008) scale(0.92,1)"><text x="0" y="0" font-size="18.5" fill="#222" stroke="#222" stroke-width="0.3">Y Axis</text></g>
<rect x="1291" y="1019.5" width="143" height="25" fill="#fff" stroke="#e2e2e2" stroke-width="1"/>
<g transform="translate(1294,1038.5) scale(0.92,1)"><text x="0" y="0" font-size="18.5" fill="#111" stroke="#111" stroke-width="0.3">Linear</text></g>
<path d="M1416,1030.0 L1420,1034.0 L1424,1030.0" fill="none" stroke="#555" stroke-width="1.2"/>
<rect x="1289.5" y="1067" width="20" height="19.5" rx="3.5" fill="#0a62c4"/>
<path d="M1294.5,1077 L1298.0,1080.5 L1304.5,1073.5" fill="none" stroke="#dbe8f8" stroke-width="1.5"/>
<g transform="translate(1314.0,1083.5) scale(0.92,1)"><text x="0" y="0" font-size="18.5" fill="#222" stroke="#222" stroke-width="0.3">Auto Range</text></g>
<rect x="1279" y="1134.5" width="168" height="113" rx="2" fill="none" stroke="#e4e4e4" stroke-width="1"/>
<rect x="1282" y="1126.5" width="62" height="14" fill="#f0f0f0"/>
<g transform="translate(1284.5,1142.5) scale(0.92,1)"><text x="0" y="0" font-size="18.5" fill="#222" stroke="#222" stroke-width="0.3">X Axis</text></g>
<rect x="1291" y="1153" width="143" height="25" fill="#f7f7f7" stroke="#e2e2e2" stroke-width="1"/>
<g transform="translate(1294,1172) scale(0.92,1)"><text x="0" y="0" font-size="18.5" fill="#9a9a9a">Linear</text></g>
<path d="M1416,1163.5 L1420,1167.5 L1424,1163.5" fill="none" stroke="#bbb" stroke-width="1.2"/>
<rect x="1289.5" y="1204" width="20" height="19.5" rx="3.5" fill="#0a62c4"/>
<path d="M1294.5,1214 L1298.0,1217.5 L1304.5,1210.5" fill="none" stroke="#dbe8f8" stroke-width="1.5"/>
<g transform="translate(1314.0,1220.5) scale(0.92,1)"><text x="0" y="0" font-size="18.5" fill="#222" stroke="#222" stroke-width="0.3">Auto Range</text></g>
</svg>
</body></html>
